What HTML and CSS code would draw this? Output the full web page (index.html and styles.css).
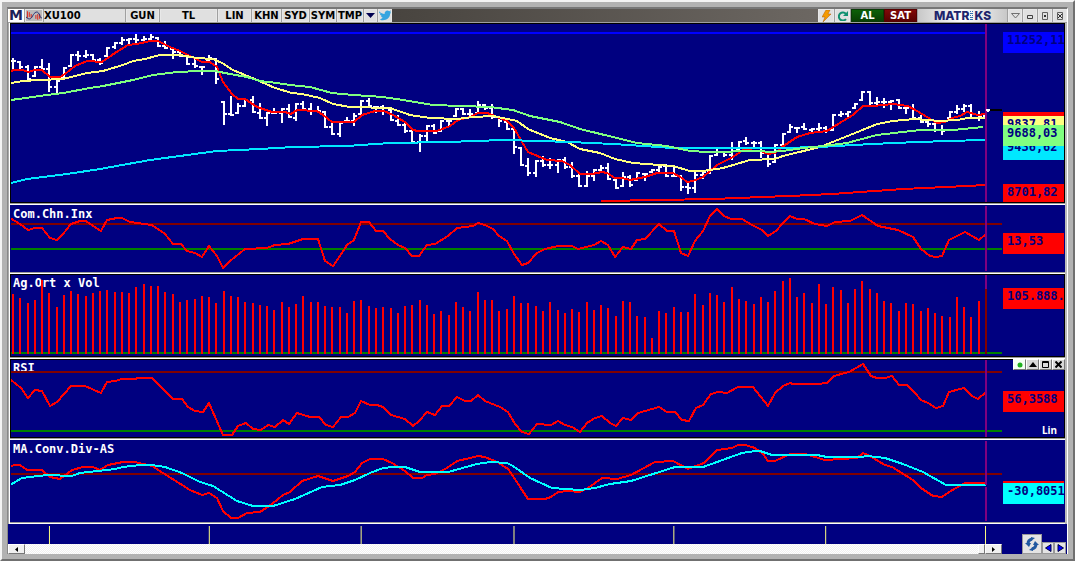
FILE: index.html
```html
<!DOCTYPE html>
<html lang="tr">
<head>
<meta charset="utf-8">
<title>XU100</title>
<link rel="stylesheet" href="styles.css">
</head>
<body>
<main class="window">
<div class="frame">
  <header class="toolbar">
    <span class="logo">M</span>
    <button class="tool w-icon" aria-label="Indicators">
      <svg width="17" height="11" viewBox="0 0 17 11" fill="none"><path d="M1.500 1v7M3.500 2v5M5.500 4v4M10.500 5v4M12.500 4v6M14.500 4v5" stroke="#e02010" stroke-width="1"/><path d="M0 7C3 10 5 10 7 6S12 0 14 4s1 4 3 4" stroke="#202a70"/></svg>
    </button>
    <input class="symbol" value="XU100" aria-label="Symbol">
    <button class="tool w-33">GUN</button>
    <button class="tool w-57">TL</button>
    <button class="tool w-33">LIN</button>
    <button class="tool w-29">KHN</button>
    <button class="tool w-27">SYD</button>
    <button class="tool w-25">SYM</button>
    <button class="tool w-25">TMP</button>
    <button class="tool w-13" aria-label="More"><svg width="9" height="5" viewBox="0 0 9 5"><path d="M0 0h9L4.500 5z" fill="#000050"/></svg></button>
    <button class="tool w-14" aria-label="Twitter"><svg width="13" height="11" viewBox="0 0 13 11"><path d="M0 1c2 2 4 3 6 3 0-3 3-5 5-3l2-1-1 2 1 0-1 2c0 5-6 8-11 6l3-2C2 7 2 6 3 6 1 5 1 4 1 4l1 0C0 3 0 2 0 1z" fill="#35a5e0"/></svg></button>
    <span class="spacer"></span>
    <button class="tool w-16" aria-label="Quick order"><svg width="9" height="12" viewBox="0 0 9 12"><path d="M4 0h4L6 4h3L1 12l2-5H0z" fill="#f59a00" stroke="#b05a00" stroke-width=".5"/></svg></button>
    <button class="tool w-15" aria-label="Reload"><svg width="10" height="10" viewBox="0 0 10 10" fill="none"><path d="M8 8A4 4 0 1 1 8 3" stroke="#109070" stroke-width="2"/><path d="M10 0v5H5z" fill="#109070"/></svg></button>
    <button class="trade buy">AL</button>
    <button class="trade sell">SAT</button>
    <div class="brand">MATR<svg width="3" height="10" viewBox="0 0 3 10"><path d="M0 .5h1M2 .5h1M0 2.500h3M0 4.500h1M2 4.500h1M0 6.500h3M0 8.500h3" stroke="#3070b0" shape-rendering="crispEdges"/></svg>KS</div>
    <button class="tool w-14" aria-label="Menu"><svg width="9" height="6" viewBox="0 0 9 6" fill="none"><path d="M.5.5h8L4.500 5z" stroke="#707070"/></svg></button>
    <button class="tool w-14" aria-label="Minimize"><svg width="8" height="6" viewBox="0 0 8 6" fill="none"><path d="M1.500 2.500h5v3h-5z" stroke="#404040"/></svg></button>
    <button class="tool w-14" aria-label="Maximize"><svg width="8" height="8" viewBox="0 0 8 8" fill="none"><path d="M1.500.5h5v7h-5z" stroke="#606060"/><path d="M3 3h2v2H3z" fill="#303030"/></svg></button>
    <button class="tool w-14" aria-label="Close"><svg width="8" height="8" viewBox="0 0 8 8" fill="none"><path d="M1.500.5h5v7h-5z" stroke="#606060"/><path d="M2 2l4 4M6 2L2 6" stroke="#303030"/></svg></button>
  </header>

  <div class="stack">
    <section class="panel boxed">
      <svg class="plot" viewBox="11 24 992 178" preserveAspectRatio="none">
        <path class="line blue" d="M11 33H985"/>
        <path class="line white" id="price-bars"/>
        <polyline class="line red" points="11,72 13,70 23,70 28,72 35,70 42,70 50,77 60,77 65,74 75,66 87,61 102,62 115,53 128,45 137,44 150,41 158,41 170,47 180,51 190,56 202,62 210,62 217,67 223,82 232,94 238,99 245,99 257,107 272,112 285,112 291,114 297,110 317,111 323,115 332,122 354,122 362,115 375,111 384,111 393,115 405,122 413,130 418,131 437,131 450,126 458,120 470,117 478,113 487,113 495,116 507,121 514,128 522,142 528,152 547,160 562,161 570,165 580,174 592,174 602,172 607,173 615,178 622,178 630,180 645,177 657,173 673,173 682,178 687,182 693,181 703,177 717,165 733,157 743,150 761,151 768,154 775,153 782,147 797,137 810,133 827,131 843,121 853,115 863,106 873,106 893,104 908,106 917,111 932,120 937,123 945,122 952,118 960,116 967,112 978,115 985,114"/>
        <polyline class="line yellow" points="11,83 23,81 40,80 63,79 87,73 103,71 123,65 133,61 145,59 160,55 180,55 197,58 213,59 222,63 233,70 257,80 275,88 292,93 302,94 320,98 333,104 350,107 390,108 410,115 430,118 457,119 473,117 493,116 517,121 528,129 550,138 567,142 580,149 600,153 615,159 633,163 673,166 690,171 703,171 723,168 750,160 775,159 783,156 820,147 840,139 860,131 877,124 893,121 915,119 940,121 957,120 968,118 985,118"/>
        <polyline class="line cyan" points="11,183 27,179 67,174 100,169 150,160 217,151 260,149 293,147 347,146 390,143 447,142 503,140 540,141 570,142 613,144 673,148 780,148 820,147 853,145 893,143 947,141 985,140"/>
        <polyline class="line green" points="11,100 47,95 63,93 90,88 103,86 133,80 153,75 177,72 200,71 215,71 230,74 247,77 260,81 277,83 290,85 310,87 332,93 353,95 383,97 403,100 433,105 490,107 513,110 530,116 560,122 580,129 617,138 637,143 667,146 690,151 707,152 760,151 770,152 783,151 803,148 823,146 847,143 877,135 920,130 953,130 983,127"/>
        <polyline class="line red" points="601,201 660,200 710,199 740,198 760,197 790,196 832,194 903,189 967,186 985,185"/>
        <path class="line black" d="M990 110H1002"/>
        <path class="line cursor" d="M986 24V202"/>
        <path class="line white" d="M986 110H990"/>
      </svg>
      <div class="axis">
        <span class="tag t-red at-ema"></span>
        <span class="tag t-cyan at-200">9436,62</span>
        <span class="tag t-yellow at-50">9837,81</span>
        <span class="tag t-green at-100">9688,03</span>
        <span class="tag t-blue at-high">11252,11</span>
        <span class="tag t-red at-low">8701,82</span>
      </div>
    </section>

    <section class="panel">
      <h2 class="name">Com.Chn.Inx</h2>
      <svg class="plot" viewBox="11 206 992 65" preserveAspectRatio="none">
        <path class="line maroon" d="M11 224H1002"/><path class="line level" d="M11 249H1002"/>
        <polyline class="line red" points="10,218 20,224 28,230 35,228 42,228 50,238 57,240 63,234 71,224 80,221 86,221 93,226 101,231 107,220 117,218 122,218 130,222 152,225 165,234 173,244 181,244 187,251 195,253 202,257 209,246 217,256 223,268 230,261 245,249 267,248 275,245 288,244 303,239 318,239 325,261 333,266 340,256 347,245 354,240 361,222 369,222 376,231 383,231 390,239 398,245 405,248 412,256 419,256 427,245 435,244 448,236 457,228 473,226 478,223 485,225 493,229 499,236 507,241 514,254 522,265 528,263 537,253 545,249 558,246 572,246 578,249 594,245 601,241 608,245 615,257 623,247 631,249 637,240 645,239 659,224 667,231 674,231 681,253 688,256 695,241 703,231 710,216 717,209 724,216 731,219 742,219 752,225 762,230 768,236 776,231 783,223 790,216 797,219 804,219 815,224 827,226 835,222 850,221 862,215 878,226 898,230 913,237 921,249 930,256 936,257 942,256 949,240 965,232 979,240 986,234"/>
        <path class="line cursor" d="M986 206V271"/>
      </svg>
      <div class="axis"><span class="tag t-red at-cci">13,53</span></div>
    </section>

    <section class="panel boxed">
      <h2 class="name">Ag.Ort x Vol</h2>
      <svg class="plot" viewBox="11 275 992 81" preserveAspectRatio="none">
        <path class="line level" d="M11 353H1002"/>
        <path class="line red" id="volume-bars"/>
        <path class="line cursor" d="M986 275V289"/><path class="line maroon" d="M986 289V354"/>
      </svg>
      <div class="axis"><span class="tag t-red at-vol">105.888.</span></div>
    </section>

    <section class="panel boxed">
      <h2 class="name">RSI</h2>
      <svg class="plot" viewBox="11 360 992 77" preserveAspectRatio="none">
        <path class="line maroon" d="M11 372H1002"/><path class="line level" d="M11 431H1002"/>
        <polyline class="line red" points="11,380 21,388 28,398 35,390 42,391 50,406 57,402 71,386 85,386 101,393 107,382 115,381 122,379 135,379 138,378 152,378 173,399 182,399 188,407 195,411 203,412 209,403 223,435 232,435 238,426 246,423 253,429 261,430 268,425 275,427 283,420 289,424 297,413 310,417 319,417 326,425 333,427 341,417 348,417 355,413 361,401 370,405 377,405 383,407 391,415 405,419 413,426 419,421 427,412 435,415 442,406 449,406 457,397 465,401 471,401 478,395 485,401 500,407 508,412 515,424 522,432 529,434 537,424 551,425 558,421 565,425 572,427 580,432 587,423 595,418 602,416 610,423 616,426 623,418 631,420 638,413 659,407 667,412 675,412 682,420 689,421 696,408 703,405 711,394 718,392 727,393 738,387 753,387 768,406 775,393 783,386 790,383 793,384 817,384 827,383 834,376 849,372 863,364 871,376 877,378 885,378 892,376 899,385 907,385 915,393 921,400 928,403 936,408 943,406 949,392 964,388 972,396 978,399 986,392"/>
        <path class="line cursor" d="M986 360V437"/>
      </svg>
      <div class="axis"><span class="tag t-red at-rsi">56,3588</span></div>
      <div class="controls">
        <button class="ctl lit" aria-label="Status"><svg width="8" height="8" viewBox="0 0 8 8"><circle cx="4" cy="4" r="2.500" fill="#20b020"/></svg></button>
        <button class="ctl" aria-label="Up"><svg width="8" height="5" viewBox="0 0 8 5"><path d="M4 0l4 5H0z"/></svg></button>
        <button class="ctl" aria-label="Maximize"><svg width="7" height="7" viewBox="0 0 7 7" fill="none"><path d="M.5.5h6v6h-6zM0 1.500h7" stroke="#000"/></svg></button>
        <button class="ctl" aria-label="Close"><svg width="7" height="7" viewBox="0 0 7 7" fill="none"><path d="M.5.5l6 6M6.500.5l-6 6" stroke="#000" stroke-width="2"/></svg></button>
      </div>
      <span class="scale">Lin</span>
    </section>

    <section class="panel">
      <h2 class="name">MA.Conv.Div-AS</h2>
      <svg class="plot" viewBox="11 441 992 80" preserveAspectRatio="none">
        <path class="line maroon" d="M11 474H1002"/>
        <polyline class="line red" points="10,467 14,465 20,465 27,470 42,470 50,477 60,479 72,470 83,467 93,467 100,470 108,465 123,462 135,462 152,466 163,473 190,490 202,495 209,493 217,498 223,511 231,518 238,518 247,513 260,512 272,504 283,495 290,492 302,481 318,476 333,481 348,476 355,472 362,463 370,459 383,459 392,463 405,471 413,478 422,478 427,475 435,474 447,468 457,461 470,458 478,456 485,457 497,462 508,469 515,479 522,490 528,499 545,499 551,497 558,492 568,491 580,492 588,488 602,478 617,479 631,475 655,462 673,461 688,469 704,463 717,450 732,448 738,445 745,445 755,448 763,454 768,461 775,461 790,454 805,454 825,460 857,458 863,453 868,455 885,465 892,467 913,480 921,488 933,496 942,497 949,492 965,483 986,483"/>
        <polyline class="line aqua" points="10,485 22,478 47,475 72,476 80,473 115,469 123,467 140,465 152,465 165,467 182,473 200,482 213,486 237,501 253,506 273,506 295,499 322,487 340,485 355,480 370,473 383,468 393,467 405,467 420,472 448,472 477,464 490,462 507,463 513,466 530,478 552,488 580,490 595,488 610,484 631,481 653,474 675,467 703,467 717,462 742,453 755,451 760,451 772,455 817,455 827,457 860,457 868,456 885,458 903,464 923,472 946,485 986,485"/>
        <path class="line cursor" d="M986 441V485"/><path class="line cursor" d="M986 487V521"/>
      </svg>
      <div class="axis"><span class="tag t-red at-macd"></span><span class="tag t-aqua at-signal">-30,8051</span></div>
    </section>
  </div>

  <footer class="footer">
    <div class="time">
      <svg class="ticks" viewBox="8 524 995 20" preserveAspectRatio="none"><path d="M49.500 526V544M209.500 526V544M361.500 526V544M514.500 526V544M674.500 526V544M826.500 526V544M986.500 526V544"/></svg>
      <div class="scroll">
        <button class="arrow" aria-label="Scroll left"><svg width="3" height="5" viewBox="0 0 3 5"><path d="M3 0v5L0 2.500z"/></svg></button>
        <span class="track"></span>
        <span class="thumb"></span>
        <button class="arrow" aria-label="Scroll right"><svg width="3" height="5" viewBox="0 0 3 5"><path d="M0 0v5l3-2.500z"/></svg></button>
      </div>
    </div>
    <div class="nav">
      <button class="sync" aria-label="Refresh"><svg width="14" height="14" viewBox="0 0 14 14" fill="none"><path d="M7 2Q3 3 3 7M7 12q4-1 4-5" stroke="#2058a0" stroke-width="3"/><path d="M0 6h6L4 10zM14 8H8l2-4z" fill="#2058a0"/><path d="M6 0l4 1-4 3zM8 14l-4-1 4-3z" fill="#2058a0"/></svg></button>
      <button class="step" aria-label="Previous"><svg width="7" height="8" viewBox="0 0 7 8"><path d="M6 .5v7L.5 4z" fill="#00f" stroke="#000040"/></svg></button>
      <button class="step" aria-label="Next"><svg width="7" height="8" viewBox="0 0 7 8"><path d="M1 .5v7L6.500 4z" fill="#00f" stroke="#000040"/></svg></button>
    </div>
  </footer>
</div>
</main>
<script src="chart.js"></script>
</body>
</html>
```
FILE: styles.css
```css
* { box-sizing: border-box; }
html, body { margin: 0; height: 100%; }
body { font-family: "DejaVu Sans", Verdana, sans-serif; font-size: 10px; }
button { margin: 0; padding: 0; font: inherit; color: inherit; border-radius: 0; }
svg { display: block; }

.window {
  height: 100%;
  padding: 5px;
  background: #b2b2b2;
  border: 2px solid;
  border-color: #f4f4f4 #707070 #707070 #f4f4f4;
}
.frame {
  height: 100%;
  display: flex;
  flex-direction: column;
  border-top: 2px solid #777;
  border-left: 1px solid #888;
  border-right: 1px solid #fff;
}

.toolbar { flex: none; display: flex; height: 14px; background: #a0a0a0; gap: 1px; font-weight: 700; }
.toolbar > * { flex: none; height: 13px; }
.logo { width: 16px; background: #fff; color: #1c2058; font: 700 14px/13px "DejaVu Sans", sans-serif; text-align: center; }
.tool {
  display: flex; align-items: center; justify-content: center;
  border: 1px solid #e8e8e8; background: #e0e0e0; color: #000; line-height: 11px;
}
.symbol { width: 81px; padding: 0; border: 0; background: #e0e0e0; font: inherit; color: #000; }
.w-icon { width: 18px; background: #bbb; }
.w-13 { width: 13px; }
.w-14 { width: 14px; }
.w-15 { width: 15px; }
.w-16 { width: 16px; }
.w-25 { width: 26px; }
.w-27 { width: 27px; }
.w-29 { width: 29px; }
.w-33 { width: 33px; }
.w-57 { width: 57px; }
.toolbar .spacer { flex: 1; margin: 0 -1px; background: linear-gradient(90deg, #48443f, #6c6762); }
.trade { width: 33px; border: 1px solid #0a3a08; color: #fff; line-height: 11px; }
.buy { background: linear-gradient(#0c6008, #084004); margin-right: -1px; }
.sell { border-color: #500; background: linear-gradient(#800808, #580000); }
.brand {
  display: flex; align-items: center; justify-content: center; gap: 1px;
  width: 89px; background: linear-gradient(90deg, #c8c8c8, #fff, #c8c8c8);
  color: #20246c; font: 800 12px/13px Inter, sans-serif;
}

.stack {
  flex: 1; min-height: 0;
  display: grid; grid-template-rows: 181fr 68fr 84fr 80fr 83fr; gap: 1px;
  padding-bottom: 1px; background: #fff;
  border-left: 1px solid #aaa; border-right: 2px solid #bbb;
}
.panel {
  position: relative; display: flex; min-height: 0; overflow: hidden;
  margin-left: 1px;
  background: #000080; border-bottom: 1px solid #999;
  padding: 1px;
}
.boxed { box-shadow: inset 0 0 0 1px #000; }
.plot { flex: 1; min-width: 0; height: 100%; position: relative; }
.axis { position: relative; flex: none; width: 61px; overflow: hidden; }
.name {
  position: absolute; left: 3px; top: 1px; margin: 0;
  color: #fff; font: 700 12px/16px "DejaVu Sans Mono", monospace;
}

.line { fill: none; stroke-width: 2; shape-rendering: crispEdges; }
.red { stroke: #f00; }
.blue { stroke: #00f; }
.white { stroke: #fff; }
.yellow { stroke: #ffff80; }
.green { stroke: #80ff80; }
.cyan { stroke: #00e8ff; }
.aqua { stroke: #0ff; }
.black { stroke: #000; }
.maroon { stroke: #800000; }
.level { stroke: #008000; }
.cursor { stroke: #800080; }

.tag {
  position: absolute; left: 0; width: 100%; height: 21px; padding-left: 4px;
  overflow: hidden; white-space: nowrap;
  color: #000080; font: 700 12px/17px "DejaVu Sans Mono", monospace;
}
.t-red { background: #f00; }
.t-cyan { background: #00e8ff; }
.t-aqua { background: #0ff; }
.t-yellow { background: #ffff80; }
.t-green { background: #80ff80; }
.t-blue { background: #00f; }
.at-high { top: 4.5%; }
.at-ema { top: 49.5%; }
.at-50 { top: 51.7%; }
.at-100 { top: 56.7%; }
.at-200 { top: 64.6%; }
.at-low { top: 90%; }
.at-cci { top: 41.5%; }
.at-vol { top: 16%; }
.at-rsi { top: 40.3%; }
.at-macd { top: 50%; }
.at-signal { top: 52.5%; }

.controls { position: absolute; top: 0; right: 0; display: flex; }
.ctl {
  width: 13px; height: 11px; display: flex; align-items: center; justify-content: center;
  background: #d8d8d8; border: 1px solid; border-color: #fff #777 #777 #fff;
}
.lit { background: #f4fff4; }
.scale { position: absolute; right: 8px; bottom: 1px; color: #fff; font: 700 10px/14px "Noto Sans", sans-serif; }

.footer { flex: none; display: flex; background: #000080; }
.time { flex: 1; min-width: 0; }
.ticks { width: 100%; height: 20px; }
.ticks path { stroke: #ffff80; stroke-width: 1; }
.scroll { display: flex; height: 10px; background: #f8f8f8; }
.arrow, .thumb {
  display: flex; align-items: center; justify-content: center;
  width: 17px; background: #f0f0f0; border: 1px solid; border-color: #fff #777 #777 #fff;
}
.thumb { width: 7px; }
.track { flex: 1; background: repeating-conic-gradient(#fff 0 25%, #f0f0f0 0 50%) 0 0 / 2px 2px; }
.nav { flex: none; width: 65px; padding-right: 1px; display: flex; align-items: flex-end; justify-content: flex-end; }
.sync, .step {
  display: flex; align-items: center; justify-content: center;
  background: #e4e4e4; border: 1px solid #999;
}
.sync { width: 20px; height: 20px; }
.step { width: 12px; height: 12px; }
```
FILE: chart.js
```js
// Bar n of every panel is centred on the same x.
const barX = n => Math.round(13 + n * 7.26);

// High, low and close of each session, in plot units.
const prices = [
  [58,70,61],[61,69,67],[65,80,79],[66,77,67],[59,70,69],[63,92,87],[77,93,81],[67,79,67],[54,67,55],[51,61,56],
  [50,58,55],[54,61,60],[58,65,63],[47,57,47],[42,49,43],[37,45,40],[38,45,39],[34,43,40],[36,42,39],[34,41,37],
  [37,47,46],[41,49,48],[48,59,52],[51,57,56],[55,65,64],[57,68,66],[66,75,67],[55,62,58],[58,84,79],[101,125,114],
  [96,116,115],[103,114,106],[99,107,100],[96,113,113],[103,119,118],[112,126,113],[108,114,113],[108,123,109],[104,118,118],[103,121,104],
  [101,111,109],[103,115,111],[106,112,111],[111,128,127],[122,135,134],[122,137,122],[117,122,121],[113,126,116],[100,115,101],[98,107,106],
  [106,113,107],[105,115,108],[109,121,121],[115,126,125],[122,133,131],[129,143,142],[134,152,136],[125,143,126],[124,134,133],[120,132,121],
  [119,126,121],[108,117,108],[108,115,114],[109,116,114],[101,114,105],[104,110,108],[104,119,117],[116,127,121],[121,130,129],[127,154,147],
  [147,166,166],[158,176,173],[160,177,161],[156,167,165],[158,169,165],[159,173,160],[157,169,167],[162,178,176],[174,187,186],[171,187,176],
  [169,181,170],[165,171,168],[163,180,180],[177,189,188],[172,187,177],[175,187,185],[172,181,173],[173,181,173],[169,173,170],[166,174,166],
  [164,177,176],[167,177,176],[175,191,187],[182,194,188],[171,193,175],[171,179,171],[155,174,156],[149,156,152],[151,157,155],[142,160,151],
  [141,150,141],[137,145,143],[141,147,143],[141,158,153],[152,167,164],[144,163,145],[133,147,133],[124,133,127],[127,133,127],[123,130,130],
  [128,132,129],[123,132,128],[126,133,130],[114,131,115],[111,117,114],[111,118,112],[103,109,103],[91,101,92],[91,105,103],[97,107,102],
  [98,108,102],[100,110,100],[99,109,108],[105,114,108],[104,119,118],[115,123,122],[121,127,124],[122,132,130],[125,135,131],[111,119,112],
  [105,114,109],[104,112,106],[104,119,118],[111,121,116],[110,118,110]
];

// Top of each volume column, in plot units.
const volumes = [
  294,298,303,300,280,293,307,295,291,294,296,293,291,290,292,292,293,287,284,286,286,292,294,302,300,299,296,297,303,291,
  296,297,302,303,305,306,310,302,307,304,296,302,302,306,307,307,313,301,300,306,308,307,308,313,306,305,300,305,314,311,
  315,302,307,311,292,300,300,311,309,296,303,303,306,311,302,310,313,309,312,302,310,305,308,316,301,302,316,317,338,311,
  313,307,312,312,294,305,293,295,302,287,299,301,304,297,302,291,281,278,297,293,303,284,304,287,290,303,289,281,289,293,
  301,303,311,303,304,311,308,313,316,317,297,307,317,301
];

document.getElementById("price-bars").setAttribute("d", prices.map(([high, low, close], n) => {
  const x = barX(n);
  const previous = n ? prices[n - 1][2] : close;
  const open = Math.min(Math.max(previous, high + 1), low - 1);
  const end = Math.min(Math.max(close, high + 1), low - 1);
  return `M${x} ${high}V${low}M${x - 3} ${open}H${x}M${x} ${end}H${x + 3}`;
}).join(""));

document.getElementById("volume-bars").setAttribute("d",
  volumes.map((top, n) => `M${barX(n)} ${top}V354`).join(""));
```
